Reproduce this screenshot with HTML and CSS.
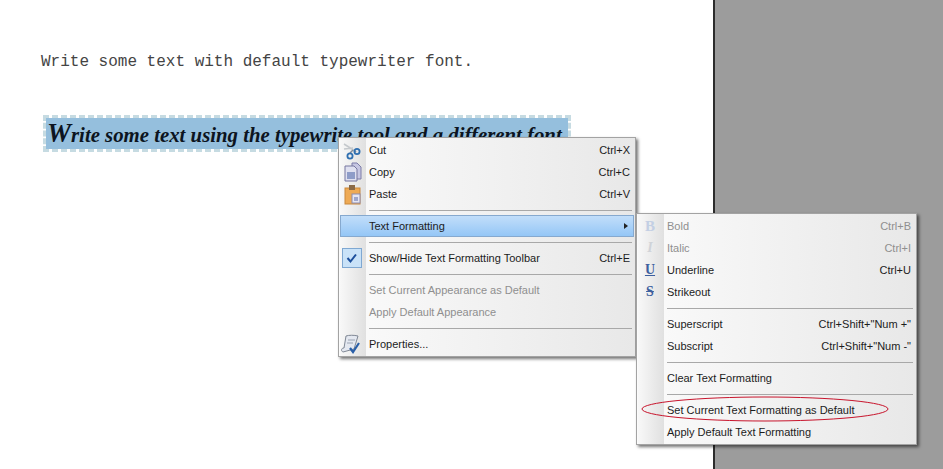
FILE: index.html
```html
<!DOCTYPE html>
<html lang="en">
<head>
<meta charset="utf-8">
<title>Typewriter tool context menu</title>
<link rel="stylesheet" href="styles.css">
</head>
<body>
<div class="stage">
  <main class="doc">
    <p class="plain">Write some text with default typewriter font.</p>
    <div class="selected"><span class="fancy"><span class="cap">W</span>rite some text using the typewrite tool and a different font</span></div>
  </main>
  <div class="side"></div>

  <div class="menu main-menu">
    <div class="row"><span class="ico"><svg viewBox="0 0 24 22" width="24" height="22"><path d="M4 5l11 7M4 10l9-1" stroke="#c4c8cc" stroke-width="1.5" fill="none"/><path d="M13 11l-3 3M15 12l1 1" stroke="#7f8a99" stroke-width="1.5"/><circle cx="10" cy="17" r="2.6" fill="none" stroke="#2f6fb0" stroke-width="1.8"/><circle cx="17" cy="12.5" r="2.6" fill="none" stroke="#2f6fb0" stroke-width="1.8"/></svg></span><span class="label">Cut</span><span class="key">Ctrl+X</span></div>
    <div class="row"><span class="ico"><svg viewBox="0 0 24 22" width="24" height="22"><path d="M12 2h5l4 4v12h-9z" fill="#c6c6e2" stroke="#7d7da8"/><path d="M5 5h9l3 3v12H5z" fill="#dfe0f0" stroke="#76769f"/><rect x="7" y="11" width="8" height="7" fill="#8e9cc8"/></svg></span><span class="label">Copy</span><span class="key">Ctrl+C</span></div>
    <div class="row"><span class="ico"><svg viewBox="0 0 24 22" width="24" height="22"><rect x="5" y="5" width="15" height="16" fill="#eeaa55" stroke="#c9883c"/><rect x="9" y="2" width="6" height="5" fill="#8a6a48"/><rect x="12" y="11" width="8" height="9" fill="#e6e6f2" stroke="#8c8cb0"/><rect x="14" y="14" width="4" height="4" fill="#9fa6cc"/></svg></span><span class="label">Paste</span><span class="key">Ctrl+V</span></div>
    <div class="sep"></div>
    <div class="row active"><span class="ico"></span><span class="label">Text Formatting</span><span class="arrow"></span></div>
    <div class="sep"></div>
    <div class="row"><span class="ico"><span class="check"><svg viewBox="0 0 20 20" width="20" height="20"><path d="M5.5 10l3 3.5 5.5-7" fill="none" stroke="#1d4f9c" stroke-width="2"/></svg></span></span><span class="label">Show/Hide Text Formatting Toolbar</span><span class="key">Ctrl+E</span></div>
    <div class="sep"></div>
    <div class="row off"><span class="ico"></span><span class="label">Set Current Appearance as Default</span></div>
    <div class="row off"><span class="ico"></span><span class="label">Apply Default Appearance</span></div>
    <div class="sep"></div>
    <div class="row"><span class="ico"><svg viewBox="0 0 24 22" width="24" height="22"><path d="M6 3c3-1 8-1 12 0l-4 13-11 3c-2-1-2-3 0-4l1 0z" fill="#e4e8f0" stroke="#7f8794"/><path d="M8 7h7M7 10h6" stroke="#9aa3b2"/><path d="M10 15l3 4 6-9" fill="none" stroke="#2a5fa8" stroke-width="2.2"/></svg></span><span class="label">Properties...</span></div>
  </div>

  <div class="menu sub-menu">
    <div class="row off"><span class="ico glyph bold">B</span><span class="label">Bold</span><span class="key">Ctrl+B</span></div>
    <div class="row off"><span class="ico glyph ital">I</span><span class="label">Italic</span><span class="key">Ctrl+I</span></div>
    <div class="row"><span class="ico glyph under">U</span><span class="label">Underline</span><span class="key">Ctrl+U</span></div>
    <div class="row"><span class="ico glyph strike">S</span><span class="label">Strikeout</span></div>
    <div class="sep"></div>
    <div class="row"><span class="ico"></span><span class="label">Superscript</span><span class="key">Ctrl+Shift+"Num +"</span></div>
    <div class="row"><span class="ico"></span><span class="label">Subscript</span><span class="key">Ctrl+Shift+"Num -"</span></div>
    <div class="sep"></div>
    <div class="row"><span class="ico"></span><span class="label">Clear Text Formatting</span></div>
    <div class="sep"></div>
    <div class="row"><span class="ico"></span><span class="label">Set Current Text Formatting as Default</span></div>
    <div class="row"><span class="ico"></span><span class="label">Apply Default Text Formatting</span></div>
    <svg class="oval" viewBox="0 0 250 26" width="250" height="26"><ellipse cx="125" cy="13" rx="123" ry="12" fill="none" stroke="#c8142c" stroke-width="1"/></svg>
  </div>
</div>
</body>
</html>
```
FILE: styles.css
```css
html, body { margin: 0; padding: 0; background: #fff; }
.stage { position: relative; display: flex; width: 943px; height: 469px; overflow: hidden; }
.doc { flex: none; width: 715px; box-sizing: border-box; background: #fff; border-right: 2px solid #2c2c2c; padding: 53px 0 0 41px; }
.side { flex: 1; background: #9c9c9c; }
.plain { margin: 0; font: 16px/18px "Liberation Mono", monospace; color: #444; }
.selected { margin: 44px 0 0 2px; width: 528px; height: 37px; box-sizing: border-box; background: #95bfdd; background-clip: padding-box; border: 3px dashed #c6dbe2; display: flex; align-items: center; padding-left: 1px; white-space: nowrap; overflow: hidden; }
.fancy { font: italic bold 20.8px/30px "Liberation Serif", serif; color: #0c1420; }
.cap { font-size: 27px; }
.menu { position: absolute; box-sizing: border-box; padding: 1px; border: 1px solid #a3a3a3; background: linear-gradient(90deg, #f8f8f8, #e0e0e0) 1px 0 / 26px 100% no-repeat, linear-gradient(90deg, #fbfbfb 0, #f5f5f5 30%, #e8e8e8 100%); box-shadow: 2px 2px 3px rgba(0,0,0,.55); font: 11px/22px "Liberation Sans", sans-serif; color: #1c1c1c; }
.main-menu { left: 338px; top: 137px; width: 298px; height: 220px; }
.sub-menu { left: 636px; top: 213px; width: 281px; height: 232px; }
.row { position: relative; display: flex; align-items: center; height: 22px; padding-right: 4px; white-space: nowrap; }
.ico { flex: none; width: 24px; height: 22px; margin-right: 5px; display: flex; align-items: center; justify-content: center; }
.label { flex: 1; }
.key { flex: none; }
.off { color: #8f8f8f; }
.sep { position: relative; height: 10px; margin-left: 29px; }
.sep::before { content: ""; position: absolute; left: 0; right: 2px; top: 5px; height: 1px; background: #a8a8a8; }
.active { background: linear-gradient(#c4dffa, #92c5f6); outline: 1px solid #86a9cf; outline-offset: -1px; }
.arrow { width: 0; height: 0; border-left: 4px solid #222; border-top: 3px solid transparent; border-bottom: 3px solid transparent; margin-right: 2px; }
.check { flex: none; width: 20px; height: 20px; box-sizing: border-box; display: flex; align-items: center; justify-content: center; background: #c9e2f8; border: 1px solid #7fa8d2; }
.check svg { flex: none; }
.glyph { font: bold 14px/22px "Liberation Serif", serif; color: #3d5f9e; }
.glyph.bold { color: #c3cfe4; font-size: 15px; }
.glyph.ital { color: #d0d3d8; font-style: italic; }
.glyph.under { text-decoration: underline; }
.glyph.strike { text-decoration: line-through; }
.oval { position: absolute; left: 3px; top: 182px; }
```
